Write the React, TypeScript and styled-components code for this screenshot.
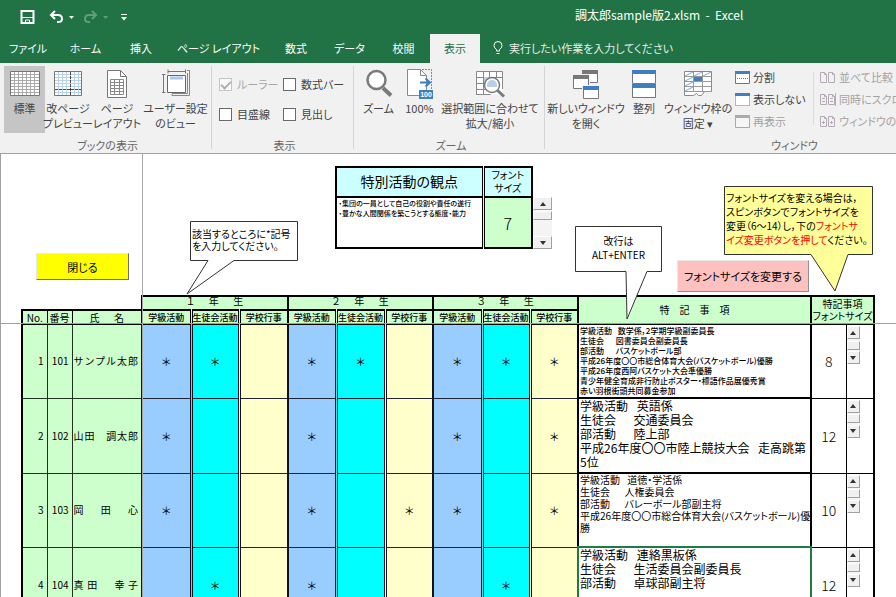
import React from "react";
import styled, { createGlobalStyle, css } from "styled-components";

const green = "#217346";
const mint = "#ccffcc";
const blue = "#99ccff";
const cyan = "#00ffff";
const cream = "#ffffcc";
const aqua = "#ccffff";

const GlobalStyle = createGlobalStyle`
  * { box-sizing: border-box; }
  body {
    margin: 0;
    font-family: "Noto Sans CJK JP", "Noto Sans", sans-serif;
    font-feature-settings: "palt";
    color: #000;
  }
  button, input { font: inherit; font-feature-settings: inherit; color: inherit; padding: 0; margin: 0; }
  svg { flex: none; }
`;

const Window = styled.div`
  height: 100vh;
  display: flex;
  flex-direction: column;
  overflow: hidden;
  background: #fff;
`;

/* ---------- title bar and tabs ---------- */

const TitleBar = styled.header`
  height: 34px;
  flex: none;
  display: flex;
  align-items: center;
  background: ${green};
  color: #fff;
  padding-left: 20px;
`;

const QuickAccess = styled.div`
  display: flex;
  align-items: center;
  width: 555px;
  flex: none;
`;

const QuickButton = styled.button<{ $w: number; $dim?: boolean }>`
  width: ${(p) => p.$w}px;
  height: 20px;
  border: 0;
  background: none;
  display: flex;
  align-items: center;
  opacity: ${(p) => (p.$dim ? 0.3 : 1)};
  color: #fff;
`;

const DocTitle = styled.h1`
  margin: 0;
  font-size: 12px;
  line-height: 18px;
  font-weight: 400;
  white-space: pre;
  padding-bottom: 4px;
`;

const TabStrip = styled.nav`
  height: 29px;
  flex: none;
  display: flex;
  background: ${green};
  color: #fff;
`;

const Tab = styled.button<{ $w: number; $active?: boolean }>`
  width: ${(p) => p.$w}px;
  flex: none;
  border: 0;
  font-size: 11px;
  white-space: nowrap;
  background: ${(p) => (p.$active ? "#f1f1f1" : "none")};
  color: ${(p) => (p.$active ? green : "#fff")};
  display: flex;
  justify-content: center;
  align-items: center;
  padding-bottom: 2px;
`;

const TellMe = styled.button`
  display: flex;
  align-items: center;
  gap: 6px;
  margin-left: 13px;
  border: 0;
  background: none;
  color: #e4efe8;
  font-size: 11px;
  white-space: nowrap;
  padding-bottom: 2px;
`;

/* ---------- ribbon ---------- */

const Ribbon = styled.div`
  height: 91px;
  flex: none;
  display: flex;
  overflow: hidden;
  background: #f1f1f1;
  border-bottom: 1px solid #a0a0a0;
  color: #444;
  font-size: 11px;
  line-height: 15px;
  padding: 3px 0 0;
`;

const Group = styled.section<{ $w: number }>`
  width: ${(p) => p.$w}px;
  flex: none;
  height: 83px;
  border-right: 1px solid #d4d4d4;
  display: flex;
  flex-direction: column;
  padding-left: 4px;
`;

const GroupBody = styled.div`
  display: flex;
  flex: none;
  height: 67px;
`;

const GroupLabel = styled.div`
  text-align: center;
  color: #666;
  line-height: 18px;
  padding-top: 3px;
`;

const BigButton = styled.button<{ $w: number; $on?: boolean }>`
  width: ${(p) => p.$w}px;
  flex: none;
  border: 0;
  background: ${(p) => (p.$on ? "#c5c5c5" : "none")};
  display: flex;
  flex-direction: column;
  align-items: center;
  white-space: pre;
  line-height: 15px;
  svg { display: block; margin: 3px 0 2px; }
`;

const Checks = styled.div`
  display: grid;
  grid-template-columns: 64px 70px;
  grid-template-rows: 30px 30px;
  padding: 3px 0 0 3px;
`;

const CheckLabel = styled.label<{ $dim?: boolean }>`
  display: flex;
  align-items: center;
  gap: 5px;
  white-space: nowrap;
  color: ${(p) => (p.$dim ? "#a6a6a6" : "#444")};
`;

const CheckBox = styled.input`
  appearance: none;
  width: 13px;
  height: 13px;
  flex: none;
  border: 1px solid #6a6a6a;
  background: #fff;
  display: grid;
  place-items: center;
  &:disabled { border-color: #c6c6c6; background: #f8f8f8; }
  &:checked::after {
    content: "";
    width: 4px;
    height: 8px;
    border: solid #b0b0b0;
    border-width: 0 2px 2px 0;
    transform: rotate(45deg);
    margin-bottom: 2px;
  }
`;

const SmallList = styled.div<{ $wide?: boolean }>`
  display: flex;
  flex-direction: column;
  flex: none;
  width: ${(p) => (p.$wide ? 180 : 78)}px;
  margin-left: 4px;
`;

const SmallButton = styled.button<{ $dim?: boolean }>`
  height: 22px;
  border: 0;
  background: none;
  display: flex;
  align-items: center;
  gap: 3px;
  white-space: nowrap;
  color: ${(p) => (p.$dim ? "#a3a3a3" : "#444")};
`;

const InnerRule = styled.div`
  width: 1px;
  height: 53px;
  margin: 6px 2px 0 0;
  background: #dcdcdc;
`;

/* ---------- sheet ---------- */

const Sheet = styled.main`
  flex: 1;
  min-height: 0;
  position: relative;
  overflow: hidden;
  border-left: 1px solid #a0a0a0;
`;

const FreezeColumn = styled.div`
  position: absolute;
  left: 141px;
  top: 0;
  bottom: 0;
  width: 1px;
  background: #a8a8a8;
`;

const FreezeRow = styled.div`
  position: absolute;
  left: 0;
  right: 0;
  top: 169px;
  height: 1px;
  background: #a0a0a0;
`;

const TopArea = styled.div`
  height: 141px;
  display: flex;
  padding: 12px 87px 0 35px;
`;

const CloseButton = styled.button`
  width: 93px;
  height: 27px;
  margin-top: 87px;
  flex: none;
  background: #ffff00;
  border: 1px solid;
  border-color: #e8e8e8 #707070 #707070 #e8e8e8;
  font-size: 11px;
`;

const ChangeButton = styled.button`
  width: 132px;
  height: 32px;
  margin: 94px 0 0 auto;
  flex: none;
  background: #ffc0c0;
  border: 1px solid;
  border-color: #e8e8e8 #909090 #909090 #e8e8e8;
  font-size: 11px;
  white-space: nowrap;
`;

const ViewpointBox = styled.div`
  display: flex;
  align-items: flex-end;
  height: 83px;
  margin-left: 206px;
  flex: none;
`;

const ViewpointTable = styled.table`
  border-collapse: collapse;
  table-layout: fixed;
  width: 196px;
  height: 83px;
  border: 2px solid #000;
  th, td { padding: 0; border-bottom: 2px solid #000; }
  th { background: ${aqua}; font-weight: 400; height: 30px; }
  th + th, td + td { border-left: 3px double #000; }
`;

const ViewpointTitle = styled.th`
  font-size: 14px;
  line-height: 20px;
  && { padding-bottom: 3px; }
`;

const ViewpointSize = styled.th`
  font-size: 10px;
  line-height: 13px;
  && { padding-bottom: 2px; }
`;

const ViewpointText = styled.td`
  vertical-align: top;
  font-size: 7px;
  line-height: 10px;
  font-weight: 500;
  white-space: pre;
`;

const ViewpointValue = styled.td`
  background: ${mint};
  text-align: center;
  font-size: 16px;
  font-weight: 300;
`;

const Spinner = styled.div<{ $large?: boolean }>`
  display: flex;
  flex-direction: column;
  justify-content: space-between;
  width: ${(p) => (p.$large ? 19 : 13)}px;
  height: ${(p) => (p.$large ? 52 : 38)}px;
  background: #f4f4f4;
`;

const SpinButton = styled.button`
  height: 13px;
  width: 100%;
  background: #f0f0f0;
  border: 1px solid;
  border-color: #fff #a0a0a0 #a0a0a0 #fff;
  display: flex;
  align-items: center;
  justify-content: center;
`;

const SpinThumb = styled.div<{ $large?: boolean }>`
  height: 9px;
  margin-bottom: ${(p) => (p.$large ? 16 : 0)}px;
  background: #f0f0f0;
  border: 1px solid;
  border-color: #fff #a0a0a0 #a0a0a0 #fff;
`;

const Roster = styled.table`
  border-collapse: collapse;
  table-layout: fixed;
  width: calc(100% - 41px);
  margin-left: 20px;
  th, td { padding: 0; }
`;

const Col = styled.col<{ $w?: number }>`
  width: ${(p) => (p.$w ? `${p.$w}px` : "auto")};
`;

const HeadRow = styled.tr`
  height: 14px;
`;

const headBase = css`
  background: ${mint};
  font-weight: 400;
  font-size: 10px;
  line-height: 11px;
  white-space: pre;
  border: 1px solid #000;
`;

const EmptyHead = styled.td``;

const LeftHead = styled.th<{ $edge?: boolean }>`
  ${headBase}
  border-top: 2px solid #000;
  border-bottom: 2px solid #000;
  ${(p) => p.$edge && "border-left: 2px solid #000;"}
`;

const GradeHead = styled.th`
  ${headBase}
  border: 2px solid #000;
  line-height: 8px;
  vertical-align: top;
  && { padding-bottom: 3px; }
`;

const ActivityHead = styled.th<{ $kind: number }>`
  ${headBase}
  font-size: 9px;
  font-weight: 500;
  border-bottom: 2px solid #000;
  border-left: ${(p) => (p.$kind === 0 ? "2px solid" : "3px double")} #000;
`;

const TallHead = styled.th`
  ${headBase}
  line-height: 12px;
  border: 2px solid #000;
`;

const DataRow = styled.tr<{ $h: number }>`
  height: ${(p) => p.$h}px;
`;

const NumCell = styled.td<{ $edge?: boolean }>`
  background: ${mint};
  border: 1px solid #1d331d;
  ${(p) => p.$edge && "border-left: 2px solid #000;"}
  && { padding-right: 3px; }
  text-align: right;
  font-size: 10px;
  line-height: 12px;
`;

const NameCell = styled.td`
  background: ${mint};
  border: 1px solid #1d331d;
  && { padding: 0 3px 0 1px; }
  font-size: 10px;
  line-height: 12px;
  text-align: justify;
  text-align-last: justify;
  font-feature-settings: normal;
  white-space: nowrap;
`;

const MarkCell = styled.td<{ $kind: number }>`
  background: ${(p) => [blue, cyan, cream][p.$kind]};
  border-bottom: 1px solid #223;
  border-left: ${(p) => (p.$kind === 0 ? "2px solid" : "3px double")} #112;
  text-align: center;
  font-size: 11px;
  line-height: 14px;
  font-feature-settings: normal;
`;

const NoteCell = styled.td<{ $active?: boolean }>`
  border: 2px solid #000;
  vertical-align: top;
  ${(p) => p.$active && css`
    outline: 2px solid #1e7b45;
    outline-offset: -1px;
  `}
`;

const noteLine: Record<number, number> = { 8: 10, 10: 12, 12: 14 };

const NoteText = styled.div<{ $size: number }>`
  height: 72px;
  padding-top: ${(p) => (p.$size === 8 ? 1 : 0)}px;
  padding-left: 1px;
  white-space: pre;
  font-size: ${(p) => p.$size}px;
  line-height: ${(p) => noteLine[p.$size]}px;
  font-weight: ${(p) => (p.$size === 8 ? 500 : 400)};
`;

const SizeCell = styled.td`
  border: 1px solid #000;
  text-align: center;
  font-size: 14px;
  font-weight: 300;
`;

const SpinCell = styled.td`
  border: 1px solid #000;
  border-right: 2px solid #000;
  vertical-align: top;
  && { padding-top: 1px; }
`;

/* ---------- callouts over the sheet ---------- */

const Callout = styled.aside<{ $top: number; $left?: number; $right?: number; $w: number }>`
  position: absolute;
  top: ${(p) => p.$top}px;
  ${(p) => (p.$left !== undefined ? `left: ${p.$left}px;` : `right: ${p.$right}px;`)}
  width: ${(p) => p.$w}px;
  font-size: 10px;
  pointer-events: none;
`;

const CalloutShape = styled.svg`
  position: absolute;
  top: 0;
  left: 0;
  overflow: visible;
  z-index: -1;
`;

const CalloutLayer = styled.div`
  position: relative;
  z-index: 1;
`;

const CalloutText = styled.p<{ $pad: string; $line: number; $center?: boolean }>`
  margin: 0;
  padding: ${(p) => p.$pad};
  line-height: ${(p) => p.$line}px;
  text-align: ${(p) => (p.$center ? "center" : "left")};
  white-space: pre;
`;

const Red = styled.span`
  color: #ff0000;
`;

/* ---------- icons ---------- */

const lines = (n: number, start: number, step: number) => Array.from({ length: n }, (_, i) => start + i * step);

const GridIcon = () => (
  <svg width="30" height="30" fill="none">
    <path d="M.5 2.500h29v24H.5z" fill="#fff" stroke="#777" />
    {lines(7, 5, 3).map((y) => <path key={y} d={`M1 ${y}.5h28`} stroke="#aaa" />)}
    {lines(6, 4, 4).map((x) => <path key={x} d={`M${x}.5 3v23`} stroke="#aaa" />)}
  </svg>
);

const BreakIcon = () => (
  <svg width="28" height="30" fill="none">
    <path d="M.5 2.500h27v24h-27z" fill="#fff" stroke="#777" />
    {lines(7, 5, 3).map((y) => <path key={y} d={`M1 ${y}.5h26`} stroke="#b9d2ec" />)}
    {lines(6, 4, 4).map((x) => <path key={x} d={`M${x}.5 3v23`} stroke="#b9d2ec" />)}
    <path d="M16.500 3v23M1 20.500h26" stroke="#444" strokeDasharray="3 1" />
  </svg>
);

const PageIcon = () => (
  <svg width="22" height="30" fill="none">
    <path d="M1.500 1.500h13l6 6v21h-19z" fill="#fff" stroke="#777" />
    <path d="M14.500 1.500v6h6" stroke="#777" />
    <path d="M4.500 10.500h13v15h-13zM4.500 13.500h13M4.500 16.500h13M4.500 19.500h13M4.500 22.500h13M8.500 10.500v15M13.500 10.500v15" stroke="#888" />
  </svg>
);

const CustomViewIcon = () => (
  <svg width="28" height="30" fill="none">
    <path d="M5.500 6.500h18v17h-18z" fill="#fff" stroke="#666" strokeWidth="1" />
    <path d="M8 7.500h13v3H8z" fill="#a9c8ec" />
    <path d="M6 2.500h17M6 .5v4M23.500 .5v4M1.500 6v17M0 5.500h3.500M0 23.500h3.500" stroke="#777" />
    <path d="M25 1.500h2.500v25H10V25M25.500 4v20.500H10" stroke="#888" />
  </svg>
);

const ZoomIcon = () => (
  <svg width="28" height="30" fill="none">
    <path d="M18 19l8 7.500" stroke="#7a7a7a" strokeWidth="4" />
    <circle cx="11.500" cy="11" r="9" fill="#fff" stroke="#7a7a7a" strokeWidth="2.500" />
  </svg>
);

const HundredIcon = () => (
  <svg width="28" height="30" fill="none">
    <path d="M1.500 .5h13l6 6v20h-19z" fill="#fff" stroke="#888" />
    <path d="M14.500 .5v6h6" stroke="#888" />
    <path d="M16 .5h9.500V22" stroke="#888" strokeDasharray="2 1" />
    <path d="M14 13.500h9M19.500 9.500l4.500 4-4.500 4" stroke="#3f7fbf" strokeWidth="2" />
    <path d="M13 21h14v9H13z" fill="#3f7fbf" />
    <text x="20" y="28" fontSize="7" fontWeight="700" textAnchor="middle" fill="#fff" fontFamily="Liberation Sans, sans-serif">100</text>
  </svg>
);

const FitIcon = () => (
  <svg width="30" height="30" fill="none">
    <path d="M1.500 2.500h26v23h-26z" fill="#fff" />
    <path d="M1.500 26V2.500h26V20M1.500 8.500h26M1.500 14.500h10M1.500 20.500h10M1.500 25.500h14M8.500 2.500v23M14.500 2.500v6M21.500 2.500v6" stroke="#888" />
    <path d="M9 8h10v5H9z" fill="#b7cfe8" />
    <path d="M22 21l7 6.500" stroke="#7a7a7a" strokeWidth="3" />
    <circle cx="17" cy="16" r="7.500" fill="#fff" stroke="#7a7a7a" strokeWidth="1.500" />
    <path d="M12 16a5 5 0 0 1 10 0v2H12z" fill="#b7cfe8" />
  </svg>
);

const Pane = ({ x, y, w, h, c }: { x: number; y: number; w: number; h: number; c: string }) => (
  <g>
    <path d={`M${x + 0.5} ${y + 0.5}h${w - 1}v${h - 1}h${1 - w}z`} fill="#fff" stroke="#777" />
    <path d={`M${x} ${y}h${w}v4h${-w}z`} fill={c} />
  </g>
);

const NewWindowIcon = () => (
  <svg width="28" height="30">
    <Pane x={10} y={1} w={16} h={13} c="#777" />
    <path d="M0 5h18v16H0z" fill="#f1f1f1" />
    <Pane x={1} y={6} w={16} h={14} c="#777" />
    <path d="M10 16h17v14H10z" fill="#f1f1f1" />
    <Pane x={11} y={17} w={16} h={13} c="#3f7fbf" />
  </svg>
);

const ArrangeIcon = () => (
  <svg width="24" height="30">
    <Pane x={0} y={1} w={24} h={14} c="#3f7fbf" />
    <Pane x={0} y={15} w={24} h={14} c="#3f7fbf" />
  </svg>
);

const FreezeIcon = () => (
  <svg width="28" height="30" fill="none">
    <path d="M.5 2.500h27v20h-7l-3 4h-3l-2-2-3 2h-9z" fill="#fff" stroke="#888" />
    <path d="M.5 7.500h27M.5 12.500h27M.5 17.500h27M.5 22.500h27M9.500 2.500v20M18.500 2.500v20" stroke="#999" />
    <path d="M1 7l8-4M10 7l8-4M19 7l8-4M1 12l8-4M1 17l8-4M1 22l8-4" stroke="#77a9dc" />
    <path d="M10 8h8v4h-8z" fill="#3f7fbf" />
  </svg>
);

const SmallPane = ({ kind }: { kind: "split" | "hide" | "show" }) => (
  <svg width="15" height="13" fill="none">
    <path d="M.5 .5h14v12H.5z" fill={kind === "show" ? "#f6f6f6" : "#fff"} stroke={kind === "show" ? "#aaa" : "#777"} strokeDasharray={kind === "hide" ? "1 1" : undefined} />
    <path d="M0 0h15v3H0z" fill={kind === "show" ? "#aaa" : "#3f7fbf"} />
    {kind === "split" && <path d="M2 7.500h11" stroke="#3f7fbf" strokeDasharray="1 1" />}
  </svg>
);

const PagesPair = ({ kind }: { kind: number }) => (
  <svg width="16" height="13" fill="none" stroke="#b5a9b5">
    <path d="M.5 1.500h4l2 2v8h-6zM4.500 1.500v2h2M8.500 1.500h4l2 2v8h-6zM12.500 1.500v2h2" />
    {kind === 1 && <path d="M2 5.500h3M2 8.500h3M10 5.500h3M10 8.500h3M15.500 0v13" />}
    {kind === 2 && <path d="M2 7.500h3M3.500 6v3M10 7.500h3M11.500 6v3" />}
  </svg>
);

const SaveIcon = () => (
  <svg width="15" height="14" fill="none" stroke="#fff">
    <path d="M1.500 1h12v12h-12z" strokeWidth="2" />
    <path d="M2 7.500h11M5.500 13v-3h4v3" strokeWidth="1" />
  </svg>
);

const UndoIcon = ({ flip }: { flip?: boolean }) => (
  <svg width="15" height="14" fill="none" stroke="#fff" strokeWidth="2">
    <path d={flip ? "M9 1l4 4-4 4M13 5H6Q2 5 2 9q0 3 4 3h1" : "M6 1L2 5l4 4M2 5h7q4 0 4 4 0 3-4 3H8"} />
  </svg>
);

const Caret = () => (
  <svg width="5" height="3"><path d="M0 0h5L2.500 3z" fill="currentColor" /></svg>
);

const CustomizeIcon = () => (
  <svg width="6" height="7" fill="#fff"><path d="M0 0h6v1H0zM0 3h6L3 6.500z" /></svg>
);

const BulbIcon = () => (
  <svg width="10" height="14" fill="none" stroke="#fff">
    <path d="M3.500 10V8.500Q1 7 1 4.500a4 4 0 0 1 8 0Q9 7 6.500 8.500V10zM3.500 12.500h3" />
  </svg>
);

const Triangle = ({ down }: { down?: boolean }) => (
  <svg width="6" height="4"><path d={down ? "M0 0h6L3 4z" : "M0 4h6L3 0z"} fill="#333" /></svg>
);

function SpinControl({ label, large }: { label: string; large?: boolean }) {
  return (
    <Spinner $large={large} role="group" aria-label={label}>
      <SpinButton aria-label="増やす"><Triangle /></SpinButton>
      <SpinThumb $large={large} />
      <SpinButton aria-label="減らす"><Triangle down /></SpinButton>
    </Spinner>
  );
}

/* ---------- data ---------- */

const tabs: [string, number][] = [
  ["ファイル", 56], ["ホーム", 59], ["挿入", 52], ["ページ レイアウト", 103],
  ["数式", 52], ["データ", 55], ["校閲", 53], ["表示", 50],
];

const grades = ["１", "２", "３"];
const activities = ["学級活動", "生徒会活動", "学校行事"];

const students = [
  {
    no: 1, id: 101, name: "サンプル太郎", marks: "110110111", size: 8, height: 74,
    note: "学級活動　数学係，2学期学級副委員長\n生徒会　　図書委員会副委員長\n部活動　　バスケットボール部\n平成26年度〇〇市総合体育大会(バスケットボール)優勝\n平成26年度西阿バスケット大会準優勝\n青少年健全育成非行防止ポスター・標語作品展優秀賞\n赤い羽根街頭共同募金参加",
  },
  {
    no: 2, id: 102, name: "山田　調太郎", marks: "100100101", size: 12, height: 75,
    note: "学級活動　英語係\n生徒会　　交通委員会\n部活動　　陸上部\n平成26年度〇〇市陸上競技大会　走高跳第\n5位",
  },
  {
    no: 3, id: 103, name: "岡　田　心", marks: "100101101", size: 10, height: 74,
    note: "学級活動　道徳・学活係\n生徒会　　人権委員会\n部活動　　バレーボール部副主将\n平成26年度〇〇市総合体育大会(バスケットボール)優\n勝",
  },
  {
    no: 4, id: 104, name: "真田　幸子", marks: "010100010", size: 12, height: 75, active: true,
    note: "学級活動　連絡黒板係\n生徒会　　生活委員会副委員長\n部活動　　卓球部副主将",
  },
];

/* An ideographic space is a full em; an en space plus a plain one sits closer to the proportional kana. */
const tighten = (text: string) => text.replace(/\u3000/g, "\u2002 ");

export default function App() {
  return (
    <Window>
      <GlobalStyle />
      <TitleBar>
        <QuickAccess>
          <QuickButton $w={29} aria-label="上書き保存"><SaveIcon /></QuickButton>
          <QuickButton $w={20} aria-label="元に戻す"><UndoIcon /></QuickButton>
          <QuickButton $w={14} aria-label="元に戻す一覧"><Caret /></QuickButton>
          <QuickButton $w={20} $dim aria-label="やり直し"><UndoIcon flip /></QuickButton>
          <QuickButton $w={18} $dim aria-label="やり直し一覧"><Caret /></QuickButton>
          <QuickButton $w={12} aria-label="カスタマイズ"><CustomizeIcon /></QuickButton>
        </QuickAccess>
        <DocTitle>{"調太郎sample版2.xlsm  -  Excel"}</DocTitle>
      </TitleBar>
      <TabStrip>
        {tabs.map(([name, w]) => (
          <Tab key={name} $w={w} $active={name === "表示"}>{name}</Tab>
        ))}
        <TellMe><BulbIcon />実行したい作業を入力してください</TellMe>
      </TabStrip>

      <Ribbon>
        <Group $w={212}>
          <GroupBody>
            <BigButton $w={41} $on><GridIcon />標準</BigButton>
            <BigButton $w={46}><BreakIcon />{"改ページ\nプレビュー"}</BigButton>
            <BigButton $w={52}><PageIcon />{"ページ\nレイアウト"}</BigButton>
            <BigButton $w={65}><CustomViewIcon />{"ユーザー設定\nのビュー"}</BigButton>
          </GroupBody>
          <GroupLabel>ブックの表示</GroupLabel>
        </Group>
        <Group $w={142}>
          <GroupBody>
            <Checks>
              <CheckLabel $dim><CheckBox type="checkbox" defaultChecked disabled />ルーラー</CheckLabel>
              <CheckLabel><CheckBox type="checkbox" />数式バー</CheckLabel>
              <CheckLabel><CheckBox type="checkbox" />目盛線</CheckLabel>
              <CheckLabel><CheckBox type="checkbox" />見出し</CheckLabel>
            </Checks>
          </GroupBody>
          <GroupLabel>表示</GroupLabel>
        </Group>
        <Group $w={191}>
          <GroupBody>
            <BigButton $w={41}><ZoomIcon />ズーム</BigButton>
            <BigButton $w={41}><HundredIcon />100%</BigButton>
            <BigButton $w={100}><FitIcon />{"選択範囲に合わせて\n拡大/縮小"}</BigButton>
          </GroupBody>
          <GroupLabel>ズーム</GroupLabel>
        </Group>
        <Group $w={496}>
          <GroupBody>
            <BigButton $w={74}><NewWindowIcon />{"新しいウィンドウ\nを開く"}</BigButton>
            <BigButton $w={42}><ArrangeIcon />整列</BigButton>
            <BigButton $w={66}><FreezeIcon />{"ウィンドウ枠の\n固定 ▾"}</BigButton>
            <SmallList>
              <SmallButton><SmallPane kind="split" />分割</SmallButton>
              <SmallButton><SmallPane kind="hide" />表示しない</SmallButton>
              <SmallButton $dim disabled><SmallPane kind="show" />再表示</SmallButton>
            </SmallList>
            <InnerRule />
            <SmallList $wide>
              <SmallButton $dim disabled><PagesPair kind={0} />並べて比較</SmallButton>
              <SmallButton $dim disabled><PagesPair kind={1} />同時にスクロール</SmallButton>
              <SmallButton $dim disabled><PagesPair kind={2} />ウィンドウの位置を元に戻す</SmallButton>
            </SmallList>
          </GroupBody>
          <GroupLabel>ウィンドウ</GroupLabel>
        </Group>
      </Ribbon>

      <Sheet>
        <FreezeColumn />
        <CalloutLayer>
          <Callout $left={189} $top={67} $w={108}>
            <CalloutShape width="108" height="75">
              <path d="M.5 .5h107v39H44L-3 73 18 39.500H.5z" fill="#fff" stroke="#333" />
            </CalloutShape>
            <CalloutText $pad="7px 0 0 2px" $line={12}>{"該当するところに*記号\nを入力してください。"}</CalloutText>
          </Callout>
          <Callout $right={234} $top={72} $w={87}>
            <CalloutShape width="87" height="94">
              <path d="M.5 .5h86v45H72L52 93 51 45.500H.5z" fill="#fff" stroke="#333" />
            </CalloutShape>
            <CalloutText $pad="8px 0 0" $line={14} $center>{"改行は\nALT+ENTER"}</CalloutText>
          </Callout>
          <Callout $right={23} $top={32} $w={149}>
            <CalloutShape width="149" height="105">
              <path d="M.5 .5h148v68H124L111 105 87 68.500H.5z" fill="#ffff99" stroke="#333" />
            </CalloutShape>
            <CalloutText $pad="5px 0 0 2px" $line={14}>
              {"フォントサイズを変える場合は，\nスピンボタンでフォントサイズを\n変更（6～14）し，下の"}
              <Red>{"フォントサ\nイズ変更ボタンを押して"}</Red>
              ください。
            </CalloutText>
          </Callout>
        </CalloutLayer>

        <TopArea>
          <CloseButton>閉じる</CloseButton>
          <ViewpointBox>
            <ViewpointTable>
              <colgroup><Col $w={147} /><Col $w={49} /></colgroup>
              <thead>
                <tr>
                  <ViewpointTitle>特別活動の観点</ViewpointTitle>
                  <ViewpointSize>フォント<br />サイズ</ViewpointSize>
                </tr>
              </thead>
              <tbody>
                <tr>
                  <ViewpointText>{" ・集団の一員として自己の役割や責任の遂行\n ・豊かな人間関係を築こうとする態度・能力"}</ViewpointText>
                  <ViewpointValue>7</ViewpointValue>
                </tr>
              </tbody>
            </ViewpointTable>
            <SpinControl label="観点のフォントサイズ" large />
          </ViewpointBox>
          <ChangeButton>フォントサイズを変更する</ChangeButton>
        </TopArea>

        <Roster>
          <colgroup>
            {[25, 25, 70, 49, 48, 49, 48, 49, 48, 49, 48, 48].map((w, i) => <Col key={i} $w={w} />)}
            <Col />
            <Col $w={35} />
            <Col $w={28} />
          </colgroup>
          <thead>
            <HeadRow>
              <EmptyHead colSpan={3} />
              {grades.map((g) => <GradeHead key={g} colSpan={3}>{`${g}　  年　  生`}</GradeHead>)}
              <TallHead rowSpan={2}>{"特　記　事　項"}</TallHead>
              <TallHead rowSpan={2} colSpan={2}>{"特記事項\nフォントサイズ"}</TallHead>
            </HeadRow>
            <HeadRow>
              <LeftHead $edge>No.</LeftHead>
              <LeftHead>番号</LeftHead>
              <LeftHead>{"氏　  名"}</LeftHead>
              {grades.map((g) => activities.map((a, k) => (
                <ActivityHead key={g + a} $kind={k}>{a}</ActivityHead>
              )))}
            </HeadRow>
          </thead>
          <tbody>
            {students.map((s) => (
              <DataRow key={s.id} $h={s.height}>
                <NumCell $edge>{s.no}</NumCell>
                <NumCell>{s.id}</NumCell>
                <NameCell>{s.name}</NameCell>
                {s.marks.split("").map((m, i) => (
                  <MarkCell key={i} $kind={i % 3}>{m === "1" ? "＊" : ""}</MarkCell>
                ))}
                <NoteCell $active={s.active}><NoteText $size={s.size}>{tighten(s.note)}</NoteText></NoteCell>
                <SizeCell>{s.size}</SizeCell>
                <SpinCell><SpinControl label={`${s.name}のフォントサイズ`} /></SpinCell>
              </DataRow>
            ))}
          </tbody>
        </Roster>
        <FreezeRow />
      </Sheet>
    </Window>
  );
}
